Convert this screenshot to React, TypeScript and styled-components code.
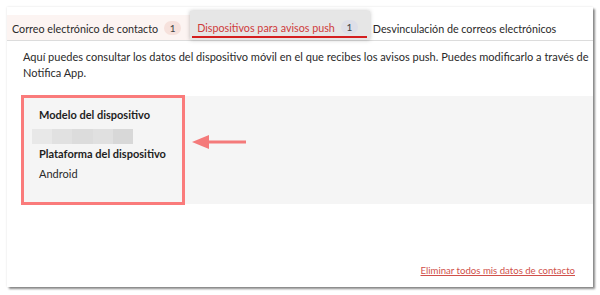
import styled, { createGlobalStyle } from "styled-components";

const GlobalStyle = createGlobalStyle`
  html, body {
    margin: 0;
    padding: 0;
    background: #ffffff;
  }
  body {
    font-family: "Lato", "Noto Sans", sans-serif;
    color: #2a2a2a;
  }
`;

const Frame = styled.div`
  width: 600px;
  height: 295px;
  padding: 7px;
  box-sizing: border-box;
`;

const Card = styled.div`
  width: 586px;
  height: 280px;
  background: #ffffff;
  overflow: hidden;
  display: flex;
  flex-direction: column;
  box-shadow: 2px 2px 2px rgba(0, 0, 0, 0.45), 0 0 2px rgba(0, 0, 0, 0.12);
`;

const TabBar = styled.div`
  display: flex;
  align-items: flex-end;
  height: 34px;
  border-bottom: 1px solid #dcdcdc;
  box-sizing: border-box;
`;

const Tab = styled.div<{ $active?: boolean; $tint?: string }>`
  position: relative;
  display: flex;
  align-items: center;
  height: ${(p) => (p.$active ? "29px" : "25px")};
  padding: ${(p) => (p.$active ? "3px 12px 0 7px" : "1px 9px 0 5px")};
  box-sizing: border-box;
  background: ${(p) => p.$tint || "transparent"};
  color: ${(p) => (p.$active ? "#cf3a3a" : "#2a2a2a")};
  font-size: 10.75px;
  white-space: nowrap;
  box-shadow: ${(p) => (p.$active ? "0 0 4px rgba(0, 0, 0, 0.25)" : "none")};
  z-index: ${(p) => (p.$active ? 1 : 0)};

  ${(p) =>
    p.$active &&
    `
    &::after {
      content: "";
      position: absolute;
      left: 2px;
      right: 3px;
      bottom: 2px;
      height: 2px;
      background: #d41f1f;
    }
  `}
`;

const PlainTab = styled(Tab)`
  padding-left: 3px;
`;

const Badge = styled.span<{ $bg: string }>`
  display: inline-flex;
  align-items: center;
  justify-content: center;
  margin-left: 6px;
  width: 17px;
  height: 14px;
  border-radius: 8px;
  background: ${(p) => p.$bg};
  color: #444444;
  font-size: 10px;
`;

const Body = styled.div`
  flex: 1;
  display: flex;
  flex-direction: column;
  padding: 8px 0 0 14px;
`;

const Intro = styled.p`
  margin: 0 0 0 2px;
  font-size: 11.02px;
  line-height: 16px;
  color: #2a2a2a;
  white-space: nowrap;
`;

const Panel = styled.div`
  display: flex;
  align-items: flex-start;
  margin-top: 15px;
  height: 108px;
  background: #f5f5f5;
`;

const Highlight = styled.div`
  width: 164px;
  height: 110px;
  margin-top: -1px;
  border: 3px solid #fa7b7b;
  box-sizing: border-box;
  padding: 9px 0 0 15px;
`;

const Label = styled.div`
  font-size: 11px;
  font-weight: 700;
  line-height: 16px;
  color: #1e1e1e;
`;

const Value = styled.div`
  margin-top: 4px;
  font-size: 11px;
  line-height: 16px;
  color: #2a2a2a;
`;

const Blurred = styled.div`
  display: flex;
  width: 101px;
  height: 15px;
  margin: 6px 0 2px -7px;
`;

const Pixel = styled.span<{ $c: string }>`
  flex: 1;
  background: ${(p) => p.$c};
`;

const ArrowWrap = styled.div`
  margin: 38px 0 0 7px;
  line-height: 0;
`;

const Footer = styled.div`
  display: flex;
  justify-content: flex-end;
  margin-top: auto;
  padding: 0 18px 11px 0;
`;

const Link = styled.a`
  font-size: 9.6px;
  color: #d0504a;
  text-decoration: underline;
  cursor: pointer;
`;

const pixels = ["#e8e8e8", "#e1e1e1", "#dcdcdc", "#e0e0e0", "#d8d8d8"];

export default function App() {
  return (
    <>
      <GlobalStyle />
      <Frame>
        <Card>
          <TabBar>
            <Tab $tint="#fcf4f2">
              Correo electrónico de contacto
              <Badge $bg="#f6e1dc">1</Badge>
            </Tab>
            <Tab $active $tint="#e6e6e6">
              Dispositivos para avisos push
              <Badge $bg="#dedfe8">1</Badge>
            </Tab>
            <PlainTab>Desvinculación de correos electrónicos</PlainTab>
          </TabBar>
          <Body>
            <Intro>
              Aquí puedes consultar los datos del dispositivo móvil en el que recibes los avisos push. Puedes
              modificarlo a través de
              <br />
              Notifica App.
            </Intro>
            <Panel>
              <Highlight>
                <Label>Modelo del dispositivo</Label>
                <Blurred>
                  {pixels.map((c, i) => (
                    <Pixel key={i} $c={c} />
                  ))}
                </Blurred>
                <Label>Plataforma del dispositivo</Label>
                <Value>Android</Value>
              </Highlight>
              <ArrowWrap>
                <svg width="56" height="16" viewBox="0 0 56 16">
                  <line x1="14" y1="8" x2="54" y2="8" stroke="#f47a7a" strokeWidth="3" />
                  <polygon points="0,8 17,1 17,15" fill="#f47a7a" />
                </svg>
              </ArrowWrap>
            </Panel>
            <Footer>
              <Link>Eliminar todos mis datos de contacto</Link>
            </Footer>
          </Body>
        </Card>
      </Frame>
    </>
  );
}
